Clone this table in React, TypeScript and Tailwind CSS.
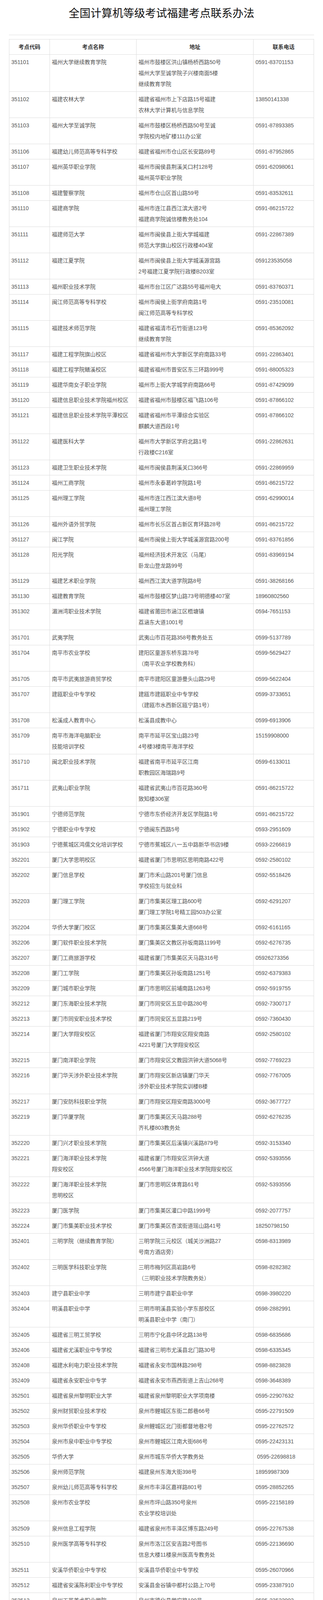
type Row = [string, string[], string[], string];

// 考点数据：代码 / 名称(按行) / 地址(按行) / 电话
const rows: Row[] = [
  ["351101", ["福州大学继续教育学院"], ["福州市鼓楼区洪山镇杨桥西路50号", "福州大学至诚学院子兴楼南面5楼", "继续教育学院"], "0591-83701153"],
  ["351102", ["福建农林大学"], ["福建省福州市上下店路15号福建", "农林大学计算机与信息学院"], "13850141338"],
  ["351103", ["福州大学至诚学院"], ["福州市鼓楼区杨桥西路50号至诚", "学院校内地矿楼111办公室"], "0591-87893385"],
  ["351106", ["福建幼儿师范高等专科学校"], ["福建省福州市仓山区长安路89号"], "0591-87952865"],
  ["351107", ["福州英华职业学院"], ["福州市闽侯县荆溪关口村128号", "福州英华职业学院"], "0591-62098061"],
  ["351108", ["福建警察学院"], ["福州市仓山区首山路59号"], "0591-83532611"],
  ["351110", ["福建商学院"], ["福州市连江县西江滨大道2号", "福建商学院诚信楼教务处104"], "0591-86215722"],
  ["351111", ["福建师范大学"], ["福州市闽侯县上街大学城福建", "师范大学旗山校区行政楼404室"], "0591-22867389"],
  ["351112", ["福建江夏学院"], ["福州市闽侯县上街大学城溪源宫路", "2号福建江夏学院行政楼B203室"], "059123535058"],
  ["351113", ["福州职业技术学院"], ["福州市台江区广达路55号福州电大"], "0591-83760371"],
  ["351114", ["闽江师范高等专科学校"], ["福州市闽侯上街学府南路1号", "闽江师范高等专科学校"], "0591-23510081"],
  ["351115", ["福建技术师范学院"], ["福建省福清市石竹街道123号", "继续教育学院"], "0591-85362092"],
  ["351117", ["福建工程学院旗山校区"], ["福建省福州市大学新区学府南路33号"], "0591-22863401"],
  ["351118", ["福建工程学院鳝溪校区"], ["福建省福州市晋安区东三环路999号"], "0591-88005323"],
  ["351119", ["福建华南女子职业学院"], ["福州市上街大学城学府南路66号"], "0591-87429099"],
  ["351120", ["福建信息职业技术学院福州校区"], ["福建省福州市鼓楼区福飞路106号"], "0591-87866102"],
  ["351121", ["福建信息职业技术学院平潭校区"], ["福建省福州市平潭综合实验区", "麒麟大道西段1号"], "0591-87866102"],
  ["351122", ["福建医科大学"], ["福州市大学新区学府北路1号", "行政楼C216室"], "0591-22862631"],
  ["351123", ["福建卫生职业技术学院"], ["福州市闽侯县荆溪关口366号"], "0591-22869959"],
  ["351124", ["福州工商学院"], ["福州市永泰葛岭学院路1号"], "0591-86215722"],
  ["351125", ["福州理工学院"], ["福州市连江西江滨大道8号", "福州理工学院"], "0591-62990014"],
  ["351126", ["福州外语外贸学院"], ["福州市长乐区首占新区育环路28号"], "0591-86215722"],
  ["351127", ["闽江学院"], ["福州市闽侯上街大学城溪源宫路200号"], "0591-83761856"],
  ["351128", ["阳光学院"], ["福州经济技术开发区（马尾）", "卧龙山登龙路99号"], "0591-83969194"],
  ["351129", ["福建艺术职业学院"], ["福州西江滨大道学院路8号"], "0591-38268166"],
  ["351130", ["福建教育学院"], ["福州市鼓楼区梦山路73号明德楼407室"], "18960802560"],
  ["351302", ["湄洲湾职业技术学院"], ["福建省莆田市涵江区梧塘镇", "荔涵东大道1001号"], "0594-7651153"],
  ["351701", ["武夷学院"], ["武夷山市百花路358号教务处五"], "0599-5137789"],
  ["351704", ["南平市农业学校"], ["建阳区童游东桥东路78号", "（南平农业学校教务科）"], "0599-5629427"],
  ["351705", ["南平市武夷旅游商贸学校"], ["南平市建阳区童游曼头山路29号"], "0599-5622404"],
  ["351707", ["建瓯职业中专学校"], ["建瓯市建瓯职业中专学校", "（建瓯市水西新区瓯宁路1号）"], "0599-3733651"],
  ["351708", ["松溪成人教育中心"], ["松溪县成教中心"], "0599-6913906"],
  ["351709", ["南平市海洋电脑职业", "技能培训学校"], ["南平市延平区宝山路23号", "4号楼3楼南平海洋学校"], "15159908000"],
  ["351710", ["闽北职业技术学院"], ["福建省南平市延平区江南", "职教园区海瑞路9号"], "0599-6133011"],
  ["351711", ["武夷山职业学院"], ["福建省武夷山市百花路360号", "致知楼306室"], "0591-86215722"],
  ["351901", ["宁德师范学院"], ["宁德市东侨经济开发区学院路1号"], "0591-86215722"],
  ["351902", ["宁德职业中专学校"], ["宁德闽东西路5号"], "0593-2951609"],
  ["351903", ["宁德蕉城区鸿儒文化培训学校"], ["宁德市蕉城区八一五中路新华书店9楼"], "0593-2266819"],
  ["352201", ["厦门大学思明校区"], ["福建省厦门市思明区思明南路422号"], "0592-2580102"],
  ["352202", ["厦门信息学校"], ["厦门市禾山路201号厦门信息", "学校招生与就业科"], "0592-5518426"],
  ["352203", ["厦门理工学院"], ["厦门市集美区理工路600号", "厦门理工学院1号精工园503办公室"], "0592-6291207"],
  ["352204", ["华侨大学厦门校区"], ["厦门市集美区集美大道668号"], "0592-6161165"],
  ["352206", ["厦门软件职业技术学院"], ["厦门集美区文教区孙坂南路1199号"], "0592-6276735"],
  ["352207", ["厦门工商旅游学校"], ["福建省厦门市集美区天马路316号"], "05926273356"],
  ["352208", ["厦门工学院"], ["厦门市集美区孙坂南路1251号"], "0592-6379383"],
  ["352209", ["厦门城市职业学院"], ["厦门市思明区前埔南路1263号"], "0592-5919755"],
  ["352212", ["厦门东海职业技术学院"], ["厦门市同安区五显中路280号"], "0592-7300717"],
  ["352213", ["厦门市同安职业技术学校"], ["厦门市同安区五显路219号"], "0592-7360430"],
  ["352214", ["厦门大学翔安校区"], ["福建省厦门市翔安区翔安南路", "4221号厦门大学翔安校区"], "0592-2580102"],
  ["352215", ["厦门南洋职业学院"], ["厦门市翔安区文教园洪钟大道5068号"], "0592-7769223"],
  ["352216", ["厦门华天涉外职业技术学院"], ["厦门市翔安区新店镇厦门华天", "涉外职业技术学院实训楼B楼"], "0592-7767005"],
  ["352217", ["厦门安防科技职业学院"], ["厦门市翔安区翔安南路3000号"], "0592-3677727"],
  ["352219", ["厦门华厦学院"], ["厦门市集美区天马路288号", "齐礼楼803教务处"], "0592-6276235"],
  ["352220", ["厦门兴才职业技术学院"], ["厦门市集美区后溪镇兴溪路879号"], "0592-3153340"],
  ["352221", ["厦门海洋职业技术学院", "翔安校区"], ["福建省厦门市翔安区洪钟大道", "4566号厦门海洋职业技术学院翔安校区"], "0592-5393556"],
  ["352222", ["厦门海洋职业技术学院", "思明校区"], ["厦门市思明区体育路61号"], "0592-5393556"],
  ["352223", ["厦门医学院"], ["厦门市集美区灌口中路1999号"], "0592-2077757"],
  ["352224", ["厦门市集美职业技术学校"], ["厦门市集美区杏滨街道瑶山路41号"], "18250798150"],
  ["352401", ["三明学院（继续教育学院）"], ["三明学院三元校区（城关沙洲路27", "号南方酒店旁）"], "0598-8313989"],
  ["352402", ["三明医学科技职业学院"], ["三明市梅列区高岩路6号", "（三明职业技术学院教务处）"], "0598-8282382"],
  ["352403", ["建宁县职业中学"], ["三明市建宁县职业中学"], "0598-3980220"],
  ["352404", ["明溪县职业中学"], ["三明市明溪县实验小学东部校区", "明溪县职业中学（南门）"], "0598-2882991"],
  ["352405", ["福建省三明工贸学校"], ["三明市宁化县中环北路138号"], "0598-6835686"],
  ["352406", ["福建省尤溪职业中专学校"], ["福建省三明市尤溪县北门路30号"], "0598-6335345"],
  ["352408", ["福建水利电力职业技术学院"], ["福建省永安市国林路298号"], "0598-8823828"],
  ["352409", ["福建省永安职业中专学"], ["福建省永安市燕西街道上吉山268号"], "0598-3648389"],
  ["352501", ["福建省泉州黎明职业大学"], ["福建省泉州黎明职业大学项南楼"], "0595-22907632"],
  ["352502", ["泉州财贸职业技术学校"], ["泉州市鲤城区东街二郎巷66号"], "0595-22791509"],
  ["352503", ["泉州华侨职业中专学校"], ["泉州鲤城区北门街都督地巷2号"], "0595-22762572"],
  ["352504", ["泉州市泉中职业中专学校"], ["泉州市鲤城区江南大街686号"], "0595-22423131"],
  ["352505", ["华侨大学"], ["泉州市城东华侨大学教务处"], "\u00a00595-22698818"],
  ["352506", ["泉州师范学院"], ["福建泉州东海大街398号"], "18959987309"],
  ["352507", ["泉州幼儿师范高等专科学校"], ["泉州市丰泽区嘉祥路801号"], "0595-28852265"],
  ["352508", ["泉州市农业学校"], ["泉州市坪山路350号泉州", "农业学校培训处"], "0595-22158189"],
  ["352509", ["泉州信息工程学院"], ["福建省泉州市丰泽区博东路249号"], "0595-22767538"],
  ["352510", ["泉州医学高等专科学校"], ["泉州市洛江区安吉路2号图书", "信息大楼11楼泉州医高专教务处"], "0595-22136690"],
  ["352511", ["安溪华侨职业中专学校"], ["安溪县华侨职业中专学校"], "0595-26070966"],
  ["352512", ["福建省安溪陈利职业中专学校"], ["安溪县金谷镇中都村公路上70号"], "0595-23387910"],
  ["352513", ["泉州工艺美术职业学院"], ["泉州市德化县学府路100号", "泉州工艺美术职业学院"], "0595-23522903"],
  ["352514", ["福建省惠安职业中专学校"], ["泉州市惠安县螺城镇建设北路南洲村"], "0595-87395209"],
  ["352515", ["福建省南安职业中专学校"], ["福建省南安市成功街1号南安职业中专学校"], "0595-86352426"],
  ["352516", ["闽南理工学院"], ["泉州市石狮市宝盖镇闽南理工学院教务处"], "0595-88259999"],
  ["352517", ["石狮鹏山工贸学校"], ["福建省石狮市南洋路114号"], "0595-88576103"],
  ["352518", ["中共永春县委党校"], ["泉州市永春县真武路98号"], "0595-23882205"],
  ["352519", ["晋江职业中专学校"], ["福建省泉州市晋江市金井镇", "晋江职业中专学校"], "0595-85387745"],
  ["352520", ["晋江安海职业中专学校"], ["泉州市晋江市安海镇兴安北路1号"], "0595-85702505"],
  ["352522", ["泉州职业技术大学", "（晋江校区）"], ["福建省晋江市内坑镇锦丰路", "泉州理工职业学院"], "0595-22545888"],
  ["352523", ["晋江市晋兴职业中专学校"], ["泉州市晋江市磁灶镇张林村西环路292号"], "0595-85856890"],
  ["352524", ["仰恩大学"], ["泉州市洛江区马甲镇"], "0595-22082006"],
  ["352525", ["福建电力职业技术学院"], ["福建省泉州市丰泽区北峰街道博东路329号"], "0595-28005683"],
  ["352526", ["闽南科技学院"], ["福建省泉州南安市康美镇康元路8号"], "0595-86654341"],
  ["352527", ["泉州海洋职业学院"], ["福建省泉州石狮市祥芝镇古浮村20区1号"], "0595-88909627"],
  ["352528", ["泉州华光职业学院"], ["泉州市台商投资区洛阳大道491号"], "0595-87354455"],
  ["352529", ["泉州纺织服装学院"], ["泉州石狮市学府路1358号"], "0595-86012369"],
  ["352601", ["闽南师范大学"], ["福建省漳州市芗城区县前直街36号", "励志楼509"], "0596-2591375"],
  ["352602", ["漳州职业技术学院"], ["漳州市芗城区大学路2号"], "0596-2660113"],
  ["352604", ["漳州市中山学校"], ["漳州市西洋坪路17号"], "0596-2590366"],
  ["352606", ["漳州城市职业学院"], ["漳州市芗城区西洋坪路27号"], "0596-2525321"],
  ["352607", ["厦门大学嘉庚学院"], ["福建省漳州市招商局经济技术", "开发区厦门大学漳州校区"], "\u00a0\u00a00596-6288299"],
  ["352608", ["漳州科技职业学院"], ["福建省漳州市漳浦县盘陀镇", "漳州科技职业学院教务处"], "0596-3921407"],
  ["352609", ["漳州理工职业学院"], ["福建省漳州市蓝田经经济开发区", "鹤鸣路一号"], "0596-7081710"],
  ["352610", ["漳州卫生职业学院"], ["漳州市芗城区西洋坪路29号"], "0596-2559567"],
  ["352801", ["龙岩学院"], ["龙岩市新罗区东肖北路1号"], "05972793898"],
  ["352802", ["闽西职业技术学院"], ["龙岩市新罗区曹溪中路5号"], "13306979699"],
  ["352804", ["福建省永定侨荣职业中专学校"], ["龙岩市永定区凤城街道西环路", "28号（练坑对面）"], "0597-3350839"],
  ["352806", ["福建省连城县职业中专学校"], ["福建省龙岩市连城县莲峰镇水竹盘"], "05978923325"],
  ["352807", ["漳平职业中专学校"], ["漳平市铁路地区和兴路19号"], "0597-7532236"],
  ["352810", ["龙岩市龙翔职业技术学校"], ["龙岩市新罗区宏业路6号"], "0597-2310095"],
];

const cell = "border border-[#dddddd] px-[5px] py-[5px] align-top text-left";
const head = "border border-[#dddddd] px-[5px] py-[5px] text-center font-bold text-[#333333]";

// 每一行固定 28px 高，避免中西文混排撑高行盒
function Lines({ items }: { items: string[] }) {
  return (
    <>
      {items.map((t, i) => (
        <div key={i} className="h-[28px] whitespace-pre leading-[28px]">
          {t}
        </div>
      ))}
    </>
  );
}

export default function App() {
  return (
    <div className="w-[828px] bg-white px-[23px] pt-[15px] pb-[17px] font-['Liberation_Sans','Noto_Sans_CJK_SC',sans-serif]">
      <h1 className="h-[40px] text-center text-[28px] leading-[40px] font-normal text-[#111111]">
        全国计算机等级考试福建考点联系办法
      </h1>
      <div className="mt-[34px] h-px bg-[#dddddd]" />
      <table className="mt-[10px] w-full table-fixed border-collapse text-[14px] text-[#555555]">
        <colgroup>
          <col className="w-[104px]" />
          <col className="w-[222px]" />
          <col className="w-[300px]" />
          <col />
        </colgroup>
        <thead>
          <tr>
            <th className={head}>
              <Lines items={["考点代码"]} />
            </th>
            <th className={head}>
              <Lines items={["考点名称"]} />
            </th>
            <th className={head}>
              <Lines items={["地址"]} />
            </th>
            <th className={head}>
              <Lines items={["联系电话"]} />
            </th>
          </tr>
        </thead>
        <tbody>
          {rows.map(([code, name, addr, tel]) => (
            <tr key={code}>
              <td className={cell}>
                <Lines items={[code]} />
              </td>
              <td className={cell}>
                <Lines items={name} />
              </td>
              <td className={cell}>
                <Lines items={addr} />
              </td>
              <td className={cell}>
                <Lines items={[tel]} />
              </td>
            </tr>
          ))}
        </tbody>
      </table>
      <div className="mt-[20px] h-[3px] bg-[#0066b3]" />
    </div>
  );
}
